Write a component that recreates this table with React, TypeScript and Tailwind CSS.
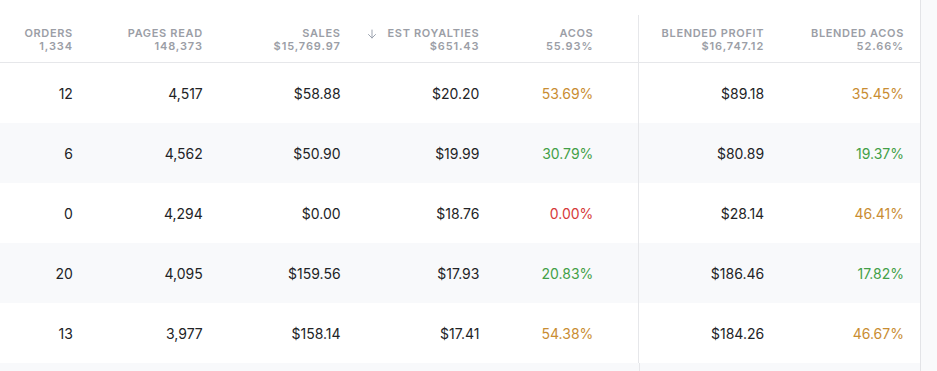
import React from "react";

type Row = { o: string; p: string; s: string; r: string; a: [string, string]; bp: string; ba: [string, string] };

const O = "text-[#c98d32]";
const G = "text-[#43a047]";
const R = "text-[#d63a3a]";

const rows: Row[] = [
  { o: "12", p: "4,517", s: "$58.88", r: "$20.20", a: ["53.69%", O], bp: "$89.18", ba: ["35.45%", O] },
  { o: "6", p: "4,562", s: "$50.90", r: "$19.99", a: ["30.79%", G], bp: "$80.89", ba: ["19.37%", G] },
  { o: "0", p: "4,294", s: "$0.00", r: "$18.76", a: ["0.00%", R], bp: "$28.14", ba: ["46.41%", O] },
  { o: "20", p: "4,095", s: "$159.56", r: "$17.93", a: ["20.83%", G], bp: "$186.46", ba: ["17.82%", G] },
  { o: "13", p: "3,977", s: "$158.14", r: "$17.41", a: ["54.38%", O], bp: "$184.26", ba: ["46.67%", O] },
];

function Arrow() {
  return (
    <svg width="12" height="12" viewBox="0 0 24 24" fill="none" stroke="#9ca3af" strokeWidth="2" strokeLinecap="round" strokeLinejoin="round" className="mr-[10px]">
      <path d="M12 4v16" />
      <path d="M5 13l7 7 7-7" />
    </svg>
  );
}

function H({ label, value, w, arrow }: { label: string; value: string; w: string; arrow?: boolean }) {
  return (
    <div className={`${w} flex flex-col items-end pr-4 pt-[27px]`}>
      <div className="flex items-center text-[11px] leading-[13px] font-semibold tracking-[0.06em] text-[#9b9ea6]">
        {arrow && <Arrow />}
        {label}
      </div>
      <div className="text-[11px] leading-[13px] font-semibold tracking-[0.08em] text-[#9b9ea6]">{value}</div>
    </div>
  );
}

export default function App() {
  return (
    <div className="w-[937px] h-[371px] overflow-hidden bg-white flex" style={{ fontFamily: "Inter, 'Noto Sans', sans-serif" }}>
      <div className="w-[920px] flex flex-col">
        <div className="flex h-[63px] shrink-0 border-b border-[#e6e7ea]">
          <H label="ORDERS" value="1,334" w="w-[89px]" />
          <H label="PAGES READ" value="148,373" w="w-[130px]" />
          <H label="SALES" value="$15,769.97" w="w-[138px]" />
          <H label="EST ROYALTIES" value="$651.43" w="w-[139px]" arrow />
          <H label="ACOS" value="55.93%" w="w-[114px]" />
          <div className="w-[30px] flex flex-col items-end">
            <div className="mt-[15px] flex-1 w-px bg-[#e6e7ea]" />
          </div>
          <H label="BLENDED PROFIT" value="$16,747.12" w="w-[141px]" />
          <H label="BLENDED ACOS" value="52.66%" w="w-[140px]" />
        </div>
        {rows.map((r, i) => (
          <div key={i} className={`flex h-[60px] shrink-0 items-stretch text-[14px] text-[#222326] ${i % 2 === 1 ? "bg-[#f8f9fb]" : "bg-white"}`}>
            <div className="w-[89px] pr-4 flex items-center justify-end">{r.o}</div>
            <div className="w-[130px] pr-4 flex items-center justify-end">{r.p}</div>
            <div className="w-[138px] pr-4 flex items-center justify-end">{r.s}</div>
            <div className="w-[139px] pr-4 flex items-center justify-end">{r.r}</div>
            <div className={`w-[114px] pr-4 flex items-center justify-end ${r.a[1]}`}>{r.a[0]}</div>
            <div className="w-[30px] flex justify-end">
              <div className="w-px bg-[#e6e7ea]" />
            </div>
            <div className="w-[141px] pr-4 flex items-center justify-end">{r.bp}</div>
            <div className={`w-[140px] pr-4 flex items-center justify-end ${r.ba[1]}`}>{r.ba[0]}</div>
          </div>
        ))}
        <div className="flex h-[60px] shrink-0 bg-[#f8f9fb]">
          <div className="w-[640px] flex justify-end">
            <div className="w-px bg-[#e6e7ea]" />
          </div>
        </div>
      </div>
      <div className="w-px bg-[#e3e4e7]" />
      <div className="flex-1 bg-[#f9fafb]" />
    </div>
  );
}
